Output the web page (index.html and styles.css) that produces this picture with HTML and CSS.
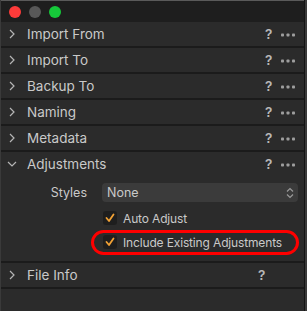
FILE: index.html
```html
<!DOCTYPE html>
<html lang="en">
<head>
    <meta charset="UTF-8">
    <title>Import Settings</title>
    <link rel="stylesheet" href="styles.css">
</head>
<body>
    <div class="window">
        <div class="titlebar">
            <span class="light red"></span>
            <span class="light gray"></span>
            <span class="light green"></span>
        </div>

        <div class="section">
            <div class="header">
                <svg class="chevron" width="25" height="10" viewBox="0 0 25 10"><path d="M9 1 L13 5 L9 9" fill="none" stroke="#b5b5b5" stroke-width="1.2"/></svg>
                <span class="title">Import From</span>
                <span class="help">?</span>
                <svg class="more" width="14" height="4" viewBox="0 0 14 4"><rect x="0" y="0.5" width="3" height="3" rx="0.8"/><rect x="5.5" y="0.5" width="3" height="3" rx="0.8"/><rect x="11" y="0.5" width="3" height="3" rx="0.8"/></svg>
            </div>
        </div>
        <div class="section">
            <div class="header">
                <svg class="chevron" width="25" height="10" viewBox="0 0 25 10"><path d="M9 1 L13 5 L9 9" fill="none" stroke="#b5b5b5" stroke-width="1.2"/></svg>
                <span class="title">Import To</span>
                <span class="help">?</span>
                <svg class="more" width="14" height="4" viewBox="0 0 14 4"><rect x="0" y="0.5" width="3" height="3" rx="0.8"/><rect x="5.5" y="0.5" width="3" height="3" rx="0.8"/><rect x="11" y="0.5" width="3" height="3" rx="0.8"/></svg>
            </div>
        </div>
        <div class="section">
            <div class="header">
                <svg class="chevron" width="25" height="10" viewBox="0 0 25 10"><path d="M9 1 L13 5 L9 9" fill="none" stroke="#b5b5b5" stroke-width="1.2"/></svg>
                <span class="title">Backup To</span>
                <span class="help">?</span>
                <svg class="more" width="14" height="4" viewBox="0 0 14 4"><rect x="0" y="0.5" width="3" height="3" rx="0.8"/><rect x="5.5" y="0.5" width="3" height="3" rx="0.8"/><rect x="11" y="0.5" width="3" height="3" rx="0.8"/></svg>
            </div>
        </div>
        <div class="section">
            <div class="header">
                <svg class="chevron" width="25" height="10" viewBox="0 0 25 10"><path d="M9 1 L13 5 L9 9" fill="none" stroke="#b5b5b5" stroke-width="1.2"/></svg>
                <span class="title">Naming</span>
                <span class="help">?</span>
                <svg class="more" width="14" height="4" viewBox="0 0 14 4"><rect x="0" y="0.5" width="3" height="3" rx="0.8"/><rect x="5.5" y="0.5" width="3" height="3" rx="0.8"/><rect x="11" y="0.5" width="3" height="3" rx="0.8"/></svg>
            </div>
        </div>
        <div class="section">
            <div class="header">
                <svg class="chevron" width="25" height="10" viewBox="0 0 25 10"><path d="M9 1 L13 5 L9 9" fill="none" stroke="#b5b5b5" stroke-width="1.2"/></svg>
                <span class="title">Metadata</span>
                <span class="help">?</span>
                <svg class="more" width="14" height="4" viewBox="0 0 14 4"><rect x="0" y="0.5" width="3" height="3" rx="0.8"/><rect x="5.5" y="0.5" width="3" height="3" rx="0.8"/><rect x="11" y="0.5" width="3" height="3" rx="0.8"/></svg>
            </div>
        </div>
        <div class="section">
            <div class="header">
                <svg class="chevron" width="25" height="10" viewBox="0 0 25 10"><path d="M7 3 L11 7 L15 3" fill="none" stroke="#b5b5b5" stroke-width="1.2"/></svg>
                <span class="title">Adjustments</span>
                <span class="help">?</span>
                <svg class="more" width="14" height="4" viewBox="0 0 14 4"><rect x="0" y="0.5" width="3" height="3" rx="0.8"/><rect x="5.5" y="0.5" width="3" height="3" rx="0.8"/><rect x="11" y="0.5" width="3" height="3" rx="0.8"/></svg>
            </div>
            <div class="body">
                <div class="field">
                    <span class="label">Styles</span>
                    <div class="select">
                        <span>None</span>
                        <svg width="8" height="12" viewBox="0 0 8 12">
                            <path d="M1 4.5 L4 1.5 L7 4.5 M1 7.5 L4 10.5 L7 7.5" fill="none" stroke="#9a9a9a" stroke-width="1.2"/>
                        </svg>
                    </div>
                </div>
                <div class="check-row">
                    <span class="checkbox">
                        <svg width="10" height="10" viewBox="0 0 10 10">
                            <path d="M1.5 5 L4 8 L8.5 1.5" fill="none" stroke="#f2a235" stroke-width="1.8" stroke-linecap="round" stroke-linejoin="round"/>
                        </svg>
                    </span>
                    <span>Auto Adjust</span>
                </div>
                <div class="check-row marked">
                    <span class="checkbox">
                        <svg width="10" height="10" viewBox="0 0 10 10">
                            <path d="M1.5 5 L4 8 L8.5 1.5" fill="none" stroke="#f2a235" stroke-width="1.8" stroke-linecap="round" stroke-linejoin="round"/>
                        </svg>
                    </span>
                    <span>Include Existing Adjustments</span>
                </div>
            </div>
        </div>
        <div class="section">
            <div class="header">
                <svg class="chevron" width="25" height="10" viewBox="0 0 25 10"><path d="M9 1 L13 5 L9 9" fill="none" stroke="#b5b5b5" stroke-width="1.2"/></svg>
                <span class="title">File Info</span>
                <span class="help solo">?</span>
            </div>
        </div>
        <div class="rest"></div>
    </div>
</body>
</html>
```

FILE: styles.css
```css
html, body {
    margin: 0;
    padding: 0;
    background: #3a3a3a;
}
body {
    font-family: Inter, "Noto Sans", sans-serif;
    font-size: 12px;
    color: #c9c9c9;
}
.window {
    width: 303px;
    height: 311px;
    margin-left: 1px;
    border-right: 1px solid #141414;
    background: #2b2b2b;
    display: flex;
    flex-direction: column;
    overflow: hidden;
}
.titlebar {
    height: 22px;
    background: #1e1e1e;
    border-top: 1px solid #5a5a5a;
    box-sizing: border-box;
    display: flex;
    align-items: center;
    gap: 8px;
    padding-left: 8px;
}
.light {
    width: 12px;
    height: 12px;
    border-radius: 50%;
}
.red { background: #fe3b3a; }
.gray { background: #585858; }
.green { background: #16c93a; }
.section {
    border-bottom: 2px solid #1b1b1b;
}
.header {
    height: 24px;
    display: flex;
    align-items: center;
}
.chevron {
    flex: none;
}
.title {
    flex: 1;
    font-size: 13.5px;
    padding-left: 1px;
}
.help {
    font-weight: 600;
    font-size: 13.5px;
    color: #b8b8b8;
    width: 16px;
}
.help.solo {
    margin-right: 30px;
}
.more {
    fill: #9e9e9e;
    margin: 1px 9px 0 0;
}
.body {
    padding: 7px 0 7px;
}
.field {
    display: flex;
    align-items: center;
    height: 19px;
    font-size: 12.5px;
}
.label {
    width: 86px;
    text-align: right;
    margin-right: 15px;
}
.select {
    width: 196px;
    height: 19px;
    box-sizing: border-box;
    background: #3b3b3b;
    border-radius: 4px;
    display: flex;
    align-items: center;
    justify-content: space-between;
    padding: 0 4px 0 5px;
}
.check-row {
    display: flex;
    align-items: center;
    gap: 6px;
    height: 24px;
    margin-left: 102px;
    position: relative;
    font-size: 12px;
    letter-spacing: -0.15px;
}
.check-row:nth-child(2) {
    margin-top: 4px;
}
.checkbox {
    width: 14px;
    height: 14px;
    border-radius: 3px;
    background: #1e1e1e;
    display: flex;
    align-items: center;
    justify-content: center;
}
.marked::before {
    content: "";
    position: absolute;
    left: -12px;
    right: 5px;
    top: 0;
    bottom: -1px;
    border: 3px solid #ff0000;
    border-radius: 13px;
}
.rest {
    flex: 1;
}
```
